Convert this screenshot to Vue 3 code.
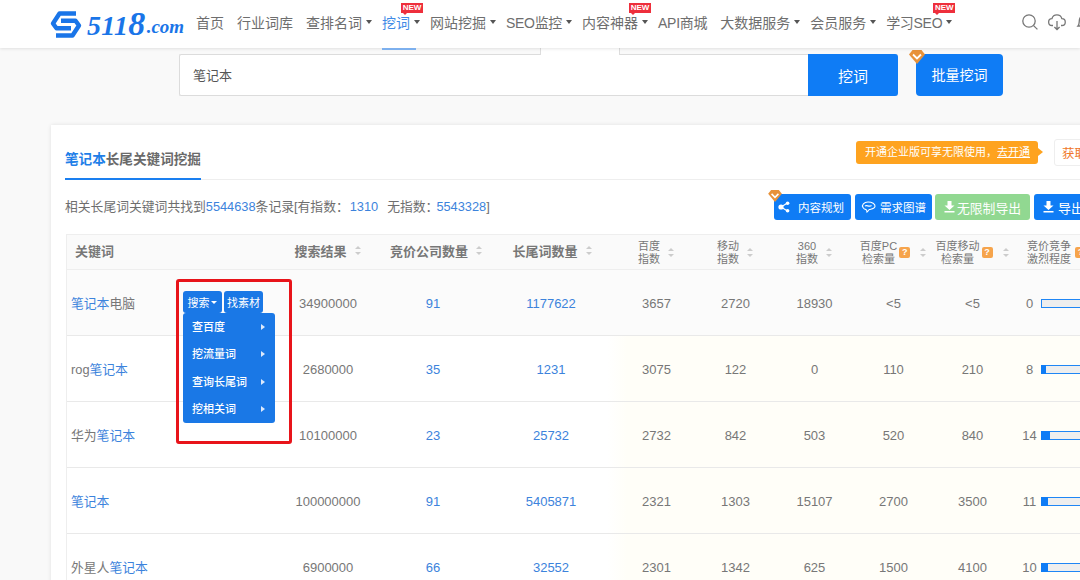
<script setup>
const navItems = [
  { label: '首页' },
  { label: '行业词库' },
  { label: '查排名词', caret: true },
  { label: '挖词', caret: true, isNew: true, active: true },
  { label: '网站挖掘', caret: true },
  { label: 'SEO监控', caret: true, tight: true },
  { label: '内容神器', caret: true, isNew: true },
  { label: 'API商城', tight: true },
  { label: '大数据服务', caret: true },
  { label: '会员服务', caret: true },
  { label: '学习SEO', caret: true, isNew: true, tight: true }
]

const smallHeads = [
  { lines: ['百度', '指数'] },
  { lines: ['移动', '指数'] },
  { lines: ['360', '指数'] },
  { lines: ['百度PC', '检索量'], help: true },
  { lines: ['百度移动', '检索量'], help: true }
]

const rows = [
  { pre: '', hit: '笔记本', post: '电脑', result: '34900000', bid: '91', tail: '1177622', vals: ['3657', '2720', '18930', '<5', '<5'], level: 0, tools: true },
  { pre: 'rog', hit: '笔记本', post: '', result: '2680000', bid: '35', tail: '1231', vals: ['3075', '122', '0', '110', '210'], level: 8 },
  { pre: '华为', hit: '笔记本', post: '', result: '10100000', bid: '23', tail: '25732', vals: ['2732', '842', '503', '520', '840'], level: 14 },
  { pre: '', hit: '笔记本', post: '', result: '100000000', bid: '91', tail: '5405871', vals: ['2321', '1303', '15107', '2700', '3500'], level: 11 },
  { pre: '外星人', hit: '笔记本', post: '', result: '6900000', bid: '66', tail: '32552', vals: ['2301', '1342', '625', '1500', '4100'], level: 10 }
]

const menu = ['查百度', '挖流量词', '查询长尾词', '挖相关词']
</script>

<template>
  <div class="page">
    <header class="topbar">
      <div class="logo">
        <svg class="logo-mark" viewBox="0 0 32 27" width="32" height="27" fill="none" stroke="#1a75e8" stroke-width="4.4" stroke-linejoin="round">
          <path d="M26 2.5H9.5L3 12.5L6.5 17.3H21" />
          <path d="M6 24.5H22.5L29 14.5L25.5 9.7H11" />
        </svg>
        <span class="logo-num">511<span class="logo-eight">8</span></span><span class="logo-dom">.com</span>
      </div>
      <nav class="nav">
        <a v-for="item in navItems" :key="item.label" class="nav-item" :class="{ active: item.active, tight: item.tight }">
          <span class="nav-label">
            {{ item.label }}
            <span v-if="item.isNew" class="new-tag">NEW</span>
          </span>
          <i v-if="item.caret" class="caret"></i>
        </a>
      </nav>
      <div class="top-icons">
        <svg width="18" height="18" viewBox="0 0 18 18" fill="none" stroke="#777" stroke-width="1.3">
          <circle cx="8" cy="8" r="6.2" />
          <path d="M12.6 12.6L16.4 16.4" />
        </svg>
        <svg width="18" height="18" viewBox="0 0 18 18" fill="none" stroke="#777" stroke-width="1.3">
          <path d="M5 12.5H4.2A3.4 3.4 0 0 1 3.9 5.7A5.2 5.2 0 0 1 13.9 5.7A3.4 3.4 0 0 1 13.8 12.5H13" />
          <path d="M9 8V16.5M6.4 14L9 16.5L11.6 14" />
        </svg>
        <svg width="18" height="18" viewBox="0 0 18 18" fill="none" stroke="#777" stroke-width="1.3">
          <path d="M3 13C4.5 11.5 4 9 4.5 6.5A4.6 4.6 0 0 1 13.5 6.5C14 9 13.5 11.5 15 13Z" />
        </svg>
      </div>
    </header>

    <section class="search">
      <div class="search-box">
        <span class="search-tab"></span>
        <div class="search-text">笔记本</div>
        <button class="search-btn">挖词</button>
      </div>
      <button class="batch-btn">
        <svg class="gem gem-lg" viewBox="0 0 16 14">
          <path d="M3.5 0H12.5L16 4.5L8 14L0 4.5Z" fill="#e8923a" />
          <path d="M4 4.5L8 8.5L12 4.5" fill="none" stroke="#fff" stroke-width="1.8" />
        </svg>
        批量挖词
      </button>
    </section>

    <main class="card">
      <div class="card-head">
        <div class="tab"><span class="hit">笔记本</span>长尾关键词挖掘</div>
        <div class="promo">开通企业版可享无限使用，<u>去开通</u></div>
        <button class="get-btn">获取数据</button>
      </div>

      <div class="info-row">
        <p class="info">相关长尾词关键词共找到<span class="num">5544638</span>条记录[有指数：<span class="num gap">1310</span>无指数：<span class="num last">5543328</span>]</p>
        <div class="actions">
          <button class="act act-blue act-plan">
            <svg class="gem gem-sm" viewBox="0 0 16 14">
              <path d="M3.5 0H12.5L16 4.5L8 14L0 4.5Z" fill="#e8923a" />
              <path d="M4 4.5L8 8.5L12 4.5" fill="none" stroke="#fff" stroke-width="1.8" />
            </svg>
            <svg width="12" height="12" viewBox="0 0 12 12" class="ico-share">
              <path d="M3 6L9.5 2M3 6L9.5 10" stroke="#fff" stroke-width="1.2" />
              <circle cx="3" cy="6" r="2.6" fill="#fff" />
              <circle cx="9.6" cy="2.2" r="1.8" fill="#fff" />
              <circle cx="9.6" cy="9.8" r="1.8" fill="#fff" />
            </svg>
            内容规划
          </button>
          <button class="act act-blue">
            <svg width="15" height="12" viewBox="0 0 15 12" fill="none" stroke="#fff" stroke-width="1.1">
              <path d="M2 6.5C0.3 4 3 1 7 1C11 1 14.4 3 14 5.5C13.6 8 10 8 8.5 8.5C7.5 9 7 10.5 6 11C6 9.5 5.5 8.5 4.5 8.4C3.4 8.3 2.6 7.5 2 6.5Z" />
              <path d="M4 5C6 3.5 8 6.5 10.5 4.5" />
            </svg>
            需求图谱
          </button>
          <button class="act act-green">
            <svg width="11" height="12" viewBox="0 0 11 12" fill="#fff">
              <path d="M3.5 0H7.5V4.5H10.5L5.5 9L0.5 4.5H3.5Z" />
              <rect x="0.5" y="10" width="10" height="1.5" />
            </svg>
            无限制导出
          </button>
          <button class="act act-blue act-export">
            <svg width="11" height="12" viewBox="0 0 11 12" fill="#fff">
              <path d="M3.5 0H7.5V4.5H10.5L5.5 9L0.5 4.5H3.5Z" />
              <rect x="0.5" y="10" width="10" height="1.5" />
            </svg>
            导出数据
          </button>
        </div>
      </div>

      <div class="table">
        <div class="tr thead">
          <div class="th th-key">关键词</div>
          <div class="th"><span>搜索结果</span><i class="sort"></i></div>
          <div class="th th-bid"><span>竞价公司数量</span><i class="sort"></i></div>
          <div class="th"><span>长尾词数量</span><i class="sort"></i></div>
          <div v-for="h in smallHeads" :key="h.lines[0]" class="th th-small" :class="{ 'has-help': h.help }">
            <span class="two">
              <span v-for="l in h.lines" :key="l">{{ l }}</span>
            </span>
            <i v-if="h.help" class="help">?</i>
            <i class="sort"></i>
          </div>
          <div class="th th-small th-last">
            <span class="two"><span>竞价竞争</span><span>激烈程度</span></span>
            <i class="help">?</i>
          </div>
        </div>

        <div v-for="r in rows" :key="r.pre + r.hit + r.post" class="tr row" :class="{ hovered: r.tools }">
          <div class="td td-key">
            <span class="kw">{{ r.pre }}<span class="link">{{ r.hit }}</span>{{ r.post }}</span>
            <div v-if="r.tools" class="tools">
              <button class="tool">搜索<i class="tool-caret"></i></button>
              <button class="tool">找素材</button>
              <ul class="menu">
                <li v-for="m in menu" :key="m">{{ m }}<i class="menu-arrow"></i></li>
              </ul>
            </div>
            <div v-if="r.tools" class="red-box"></div>
          </div>
          <div class="td">{{ r.result }}</div>
          <div class="td td-bid link">{{ r.bid }}</div>
          <div class="td td-tail link">{{ r.tail }}</div>
          <div v-for="(v, i) in r.vals" :key="i" class="td">{{ v }}</div>
          <div class="td td-level">
            <span class="level-num">{{ r.level }}</span>
            <span class="bar"><span class="bar-fill" :style="{ width: r.level * 0.65 + 'px' }"></span></span>
          </div>
        </div>
      </div>
    </main>
  </div>
</template>

<style>
html, body { margin: 0; padding: 0; background: #f9f9f9; overflow: hidden; }
</style>

<style scoped>
.page {
  width: 1080px;
  height: 580px;
  overflow: hidden;
  background: #f9f9f9;
  font-family: "Liberation Sans", "Noto Sans CJK SC", sans-serif;
  color: #666;
}
button { font-family: inherit; border: 0; padding: 0; cursor: pointer; }
i { font-style: normal; }

/* top bar */
.topbar {
  position: relative;
  z-index: 3;
  height: 48px;
  background: #fff;
  box-shadow: 0 1px 3px rgba(0, 0, 0, 0.1);
  display: flex;
  padding-left: 50px;
  box-sizing: border-box;
}
.logo { display: flex; align-items: center; width: 146px; height: 48px; flex: none; }
.logo-mark { flex: none; margin-right: 5px; margin-top: 1px; }
.logo-num {
  font: italic bold 28px "Liberation Serif", serif;
  color: #1a75e8;
  letter-spacing: 0.3px;
}
.logo-eight { font-size: 34px; }
.logo-dom {
  font: italic bold 19px "Liberation Serif", serif;
  color: #1a75e8;
  margin-left: 1px;
  margin-top: 6px;
}
.nav { display: flex; gap: 13px; flex: none; }
.nav-item {
  position: relative;
  display: flex;
  align-items: center;
  flex: none;
  height: 48px;
  box-sizing: border-box;
  padding-bottom: 4px;
  font-size: 14px;
  color: #6e6e6e;
  white-space: nowrap;
}
.nav-item.tight { letter-spacing: -0.3px; }
.nav-label { position: relative; }
.new-tag {
  position: absolute;
  left: calc(100% - 9px);
  top: -9px;
  width: 22px;
  height: 10px;
  background: #ee2f3c;
  color: #fff;
  font: bold 8px/10px "Liberation Sans", sans-serif;
  letter-spacing: 0;
  text-align: center;
}
.new-tag::after {
  content: "";
  position: absolute;
  left: 2px;
  top: 10px;
  border-left: 2px solid transparent;
  border-right: 2px solid transparent;
  border-top: 2px solid #ee2f3c;
}
.caret {
  flex: none;
  width: 0;
  height: 0;
  margin-left: 4px;
  margin-right: -3px;
  border-left: 3.5px solid transparent;
  border-right: 3.5px solid transparent;
  border-top: 4px solid #555;
}
.nav-item.active { color: #3f8ae6; }
.nav-item.active::after {
  content: "";
  position: absolute;
  left: 0;
  right: 1px;
  bottom: -2px;
  height: 2px;
  background: #7db0ee;
}
.top-icons {
  display: flex;
  align-items: center;
  gap: 9px;
  margin-left: 72px;
  padding-bottom: 4px;
}

/* search */
.search { display: flex; margin: 6px 0 0 179px; height: 42px; }
.search-box {
  position: relative;
  width: 719px;
  height: 42px;
  box-sizing: border-box;
  display: flex;
  background: #fff;
  border: 1px solid #dcdcdc;
  border-right: 0;
  border-radius: 2px;
}
.search-tab {
  position: absolute;
  left: 360px;
  top: -7px;
  width: 80px;
  height: 7px;
  box-sizing: border-box;
  background: #fff;
  border: 1px solid #ddd;
  border-width: 0 1px;
  box-shadow: 0 1px 0 #fff;
}
.search-text {
  flex: 1;
  padding-left: 13px;
  font-size: 13px;
  line-height: 42px;
  color: #555;
}
.search-btn {
  width: 90px;
  margin: -1px 0;
  background: #0f7cf5;
  color: #fff;
  font-size: 15px;
  border-radius: 0 3px 3px 0;
}
.batch-btn {
  position: relative;
  margin-left: 18px;
  width: 87px;
  height: 42px;
  background: #0f7cf5;
  color: #fff;
  font-size: 14px;
  border-radius: 4px;
  padding-bottom: 2px;
}
.gem { position: absolute; display: block; }
.gem-lg { left: -7px; top: -4px; width: 16px; height: 14px; }
.gem-sm { left: -6px; top: -4px; width: 14px; height: 12px; }

/* card */
.card {
  width: 1060px;
  margin: 29px 0 0 51px;
  padding: 14px 0 0 14px;
  box-sizing: border-box;
  height: 500px;
  background: #fff;
  box-shadow: 0 0 4px rgba(0, 0, 0, 0.1);
}
.card-head {
  display: flex;
  height: 41px;
  box-sizing: border-box;
  border-bottom: 1px solid #eee;
  width: 1046px;
}
.tab {
  height: 41px;
  box-sizing: border-box;
  border-bottom: 2px solid #1a7ff0;
  font-size: 13.6px;
  line-height: 42px;
  font-weight: 700;
  color: #6a6a6a;
  white-space: nowrap;
}
.hit { color: #1f7fe8; }
.promo {
  position: relative;
  margin: 2px 0 0 auto;
  height: 23px;
  width: 182px;
  box-sizing: border-box;
  padding-left: 9px;
  background: #fea31f;
  border-radius: 3px;
  color: #fff;
  font-size: 11px;
  line-height: 23px;
  white-space: nowrap;
}
.promo::after {
  content: "";
  position: absolute;
  right: -5px;
  top: 7px;
  border-top: 4.5px solid transparent;
  border-bottom: 4.5px solid transparent;
  border-left: 5px solid #fea31f;
}
.get-btn {
  margin-left: 16px;
  width: 57px;
  height: 27px;
  box-sizing: border-box;
  background: #fff;
  border: 1px solid #eee;
  border-radius: 3px;
  color: #f0782a;
  font-size: 12.5px;
  text-align: left;
  padding-left: 7px;
  white-space: nowrap;
  overflow: hidden;
}
.info-row {
  display: flex;
  align-items: center;
  width: 1046px;
  margin-top: 14px;
  height: 26px;
}
.info { margin: -4px 0 0; font-size: 12.8px; color: #6e6e6e; white-space: nowrap; }
.num { color: #3c83dc; }
.num.gap { margin: 0 9px 0 1px; }
.num.last { margin-left: -2px; }
.actions { display: flex; margin-left: auto; gap: 4px; }
.act {
  position: relative;
  height: 26px;
  border-radius: 3px;
  color: #fff;
  font-size: 11.5px;
  display: flex;
  align-items: center;
  justify-content: center;
  gap: 4px;
  width: 77px;
  white-space: nowrap;
}
.act-blue { background: #0f7cf5; }
.act-green { background: #91d891; width: 95px; font-size: 12.8px; margin-left: -1px; gap: 2px; }
.act-plan { padding-right: 3px; box-sizing: border-box; }
.act .ico-share { margin-right: 4px; }
.act-export { justify-content: flex-start; padding-left: 9px; font-size: 13px; box-sizing: border-box; }

/* table */
.table { margin: 14px 0 0 1px; width: 1045px; border-left: 1px solid #eee; }
.tr {
  display: grid;
  grid-template-columns: 213px 96px 112px 129px 79px 79px 79px 79px 79px 1fr;
}
.thead {
  height: 36px;
  box-sizing: border-box;
  background: #fafafa;
  border-top: 1px solid #eee;
  border-bottom: 1px solid #eee;
}
.th {
  display: flex;
  align-items: center;
  justify-content: center;
  gap: 8px;
  padding-bottom: 3px;
  font-size: 13px;
  font-weight: 700;
  color: #777;
  white-space: nowrap;
}
.th-key { justify-content: flex-start; padding-left: 8px; }
.th-bid { padding-left: 9px; }
.th-small { font-size: 11px; font-weight: 400; color: #777; padding: 1px 0 0; }
.th-small.has-help { gap: 2px; }
.th-small.has-help .sort { margin-left: 8px; }
.th-last { justify-content: flex-start; padding-left: 15px; gap: 4px; }
.two { display: flex; flex-direction: column; align-items: center; line-height: 13px; }
.sort {
  position: relative;
  width: 7px;
  height: 9px;
  flex: none;
}
.sort::before, .sort::after {
  content: "";
  position: absolute;
  left: 0;
  border-left: 3.5px solid transparent;
  border-right: 3.5px solid transparent;
}
.sort::before { top: 0; border-bottom: 3.5px solid #ccc; }
.sort::after { bottom: 0; border-top: 3.5px solid #ccc; }
.help {
  flex: none;
  width: 11px;
  height: 11px;
  border-radius: 2px;
  background: #f6a44c;
  color: #fff;
  font-size: 9px;
  font-weight: bold;
  line-height: 11px;
  text-align: center;
}
.row {
  height: 66px;
  box-sizing: border-box;
  border-bottom: 1px solid #e9e9e9;
  background: linear-gradient(to right, #fff 540px, #fffef8 560px);
}
.row.hovered { background: #fbfbfb; }
.td {
  display: flex;
  align-items: center;
  justify-content: center;
  padding-top: 1px;
  font-size: 13px;
  color: #777;
  white-space: nowrap;
}
.td.link, .link { color: #3c83dc; }
.td-bid { padding-left: 2px; }
.td-tail { padding-right: 3px; }
.td-key { position: relative; justify-content: flex-start; padding: 0 0 0 4px; }
.kw { font-size: 12.8px; color: #777; }
.tools {
  position: relative;
  display: flex;
  gap: 2px;
  margin: -1px 0 0 48px;
}
.tool {
  height: 22px;
  width: 39px;
  background: #1a78e6;
  color: #fff;
  font-size: 11px;
  border-radius: 3px;
  display: flex;
  align-items: center;
  justify-content: center;
}
.tool-caret {
  margin-left: 2px;
  border-left: 3px solid transparent;
  border-right: 3px solid transparent;
  border-top: 3px solid #fff;
}
.menu {
  position: absolute;
  z-index: 2;
  left: 0;
  top: 22px;
  width: 92px;
  height: 110px;
  box-sizing: border-box;
  margin: 0;
  padding: 1px 0 0;
  list-style: none;
  background: #1a78e6;
  border-radius: 3px;
}
.menu li {
  position: relative;
  height: 27.4px;
  padding-left: 9px;
  color: #fff;
  font-size: 11px;
  font-weight: 500;
  line-height: 27.4px;
}
.menu-arrow {
  position: absolute;
  left: 78px;
  top: 10px;
  border-top: 3.5px solid transparent;
  border-bottom: 3.5px solid transparent;
  border-left: 4px solid #dce9fb;
}
.red-box {
  position: absolute;
  z-index: 2;
  left: 109px;
  top: 9px;
  width: 116px;
  height: 165px;
  box-sizing: border-box;
  border: 3px solid #e8141a;
  border-radius: 3px;
  pointer-events: none;
}
.td-level { justify-content: flex-start; padding: 0 0 0 6px; }
.level-num { width: 23px; text-align: center; font-size: 13px; margin-top: 1px; }
.bar {
  display: block;
  width: 80px;
  height: 9px;
  margin-top: 2px;
  box-sizing: border-box;
  background: #eee;
  box-shadow: inset 0 0 0 1px #1f86f5;
  flex: none;
}
.bar-fill { display: block; height: 100%; background: #0f7cf5; }
</style>
